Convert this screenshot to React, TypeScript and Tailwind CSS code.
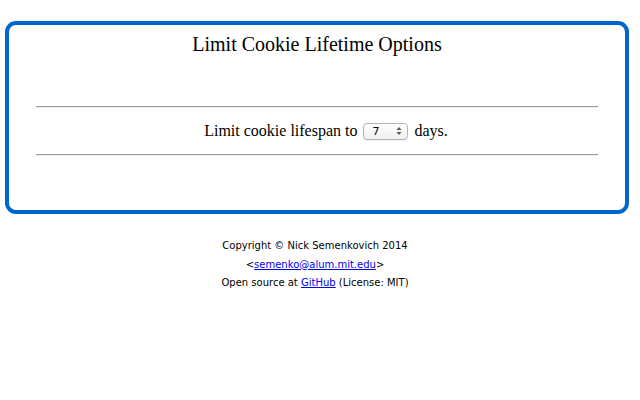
import React from "react";

export default function App() {
  return (
    <div className="w-[640px] h-[400px] bg-white">
      <div className="pt-[21px] pl-[5px]">
        <div className="w-[624px] h-[193px] border-4 border-[#0066cc] rounded-[11px] px-[27px] pt-[7px]">
          <h1
            className="text-center text-[20px] leading-[24px] text-black"
            style={{ fontFamily: '"Liberation Serif", serif' }}
          >
            Limit Cookie Lifetime Options
          </h1>
          <div className="mt-[50px] h-[2px] border-t border-t-[#9a9a9a] border-b border-b-[#eeeeee]" />
          <div
            className="h-[46px] flex items-center justify-center pl-[18px] text-[16px] text-black"
            style={{ fontFamily: '"Liberation Serif", serif' }}
          >
            <span>Limit cookie lifespan to</span>
            <span className="ml-[6px] mr-[6px] w-[45px] h-[17px] rounded-[4px] border border-[#b5b5b5] bg-gradient-to-b from-white to-[#f0f0f0] flex items-center justify-between pl-[8px] pr-[5px] shadow-[0_1px_1px_rgba(0,0,0,0.08)]">
              <span
                className="text-[11px] leading-none text-black"
                style={{ fontFamily: '"DejaVu Sans", sans-serif' }}
              >
                7
              </span>
              <svg width="6" height="10" viewBox="0 0 6 10">
                <path d="M3 1 L5.5 4 L0.5 4 Z" fill="#555" />
                <path d="M3 9 L5.5 6 L0.5 6 Z" fill="#555" />
              </svg>
            </span>
            <span>days.</span>
          </div>
          <div className="h-[2px] border-t border-t-[#9a9a9a] border-b border-b-[#eeeeee]" />
        </div>
      </div>
      <div
        className="mt-[23px] pr-[10px] text-center text-[10px] leading-[18.5px] text-black"
        style={{ fontFamily: '"DejaVu Sans", Verdana, sans-serif' }}
      >
        <div>Copyright © Nick Semenkovich 2014</div>
        <div>
          &lt;<a className="text-[#0000ee] underline" href="#">semenko@alum.mit.edu</a>&gt;
        </div>
        <div>
          Open source at <a className="text-[#0000ee] underline" href="#">GitHub</a> (License: MIT)
        </div>
      </div>
    </div>
  );
}
